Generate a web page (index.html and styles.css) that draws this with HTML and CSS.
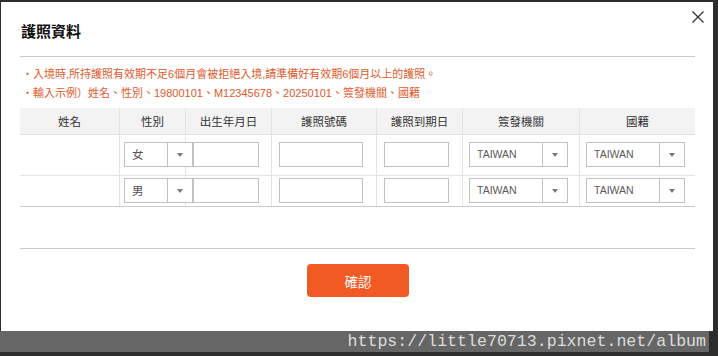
FILE: index.html
```html
<!DOCTYPE html>
<html lang="zh-Hant">
<head>
    <meta charset="UTF-8">
    <meta name="viewport" content="width=device-width, initial-scale=1.0">
    <title>護照資料</title>
    <link rel="stylesheet" href="styles.css">
</head>
<body>
    <div class="modal">
        <button class="modal-close" type="button" aria-label="close">
            <svg width="12" height="12" viewBox="0 0 12 12">
                <path d="M0.5 0.5 L11.5 11.5 M11.5 0.5 L0.5 11.5" stroke="#333" stroke-width="1.3" fill="none"/>
            </svg>
        </button>

        <div class="modal-head">
            <h3 class="modal-title">護照資料</h3>
        </div>

        <ul class="notes">
            <li>・入境時,所持護照有效期不足6個月會被拒絕入境,請準備好有效期6個月以上的護照。</li>
            <li>・輸入示例）姓名、性別、19800101、M12345678、20250101、簽發機關、國籍</li>
        </ul>

        <div class="passport-table">
            <div class="row row-head">
                <div class="cell">姓名</div>
                <div class="cell">性別</div>
                <div class="cell">出生年月日</div>
                <div class="cell">護照號碼</div>
                <div class="cell">護照到期日</div>
                <div class="cell">簽發機關</div>
                <div class="cell">國籍</div>
            </div>
            <div class="row row-first">
                <div class="cell"></div>
                <div class="cell col-sex">
                    <div class="select sel-sex"><span class="select-text">女</span><span class="select-arrow"></span></div>
                </div>
                <div class="cell col-birth"><input class="field f-birth" type="text"></div>
                <div class="cell col-no"><input class="field f-no" type="text"></div>
                <div class="cell col-exp"><input class="field f-exp" type="text"></div>
                <div class="cell col-issue">
                    <div class="select sel-wide"><span class="select-text latin">TAIWAN</span><span class="select-arrow"></span></div>
                </div>
                <div class="cell col-nation">
                    <div class="select sel-wide"><span class="select-text latin">TAIWAN</span><span class="select-arrow"></span></div>
                </div>
            </div>
            <div class="row row-last">
                <div class="cell"></div>
                <div class="cell col-sex">
                    <div class="select sel-sex"><span class="select-text">男</span><span class="select-arrow"></span></div>
                </div>
                <div class="cell col-birth"><input class="field f-birth" type="text"></div>
                <div class="cell col-no"><input class="field f-no" type="text"></div>
                <div class="cell col-exp"><input class="field f-exp" type="text"></div>
                <div class="cell col-issue">
                    <div class="select sel-wide"><span class="select-text latin">TAIWAN</span><span class="select-arrow"></span></div>
                </div>
                <div class="cell col-nation">
                    <div class="select sel-wide"><span class="select-text latin">TAIWAN</span><span class="select-arrow"></span></div>
                </div>
            </div>
        </div>

        <div class="modal-foot">
            <button class="btn-confirm" type="button">確認</button>
        </div>
    </div>

    <div class="watermark">https://little70713.pixnet.net/album</div>
</body>
</html>
```

FILE: styles.css
```css
body {
    margin: 0;
    padding: 0;
    background-color: #2d2d2d;
    font-family: "Liberation Sans", "Noto Sans CJK TC", sans-serif;
    color: #333;
    overflow: hidden;
}

.modal {
    position: relative;
    box-sizing: border-box;
    width: 712px;
    height: 329px;
    margin: 2px 0 0 1px;
    padding: 0 18px 0 19px;
    background-color: #fff;
}

.modal-close {
    position: absolute;
    top: 9px;
    right: 9px;
    width: 12px;
    height: 12px;
    padding: 0;
    border: none;
    background: none;
    line-height: 0;
    cursor: pointer;
}

.modal-head {
    padding: 20px 0 16px 1px;
    border-bottom: 1px solid #c8c8c8;
}

.modal-title {
    margin: 0;
    font-family: "Noto Sans CJK TC", sans-serif;
    font-size: 15px;
    line-height: 18px;
    font-weight: bold;
    color: #111;
}

.notes {
    list-style: none;
    margin: 0 0 6px 0;
    padding: 8px 0 0 2px;
    font-size: 11px;
    line-height: 18.5px;
    color: #e0592a;
}

.passport-table {
    font-size: 11.5px;
}

.row {
    display: grid;
    grid-template-columns: 99px 66px 86px 105px 86px 117px 116px;
    border-bottom: 1px solid #e3e3e3;
}

.cell {
    box-sizing: border-box;
    border-left: 1px solid #e3e3e3;
}

.cell:first-child {
    border-left: none;
}

.row-head {
    background-color: #f3f3f3;
}

.row-head .cell {
    height: 26px;
    line-height: 26px;
    text-align: center;
    color: #333;
    font-family: "Noto Sans CJK TC", sans-serif;
}

.row-first .cell {
    padding-top: 7px;
    padding-bottom: 8px;
}

.row-last {
    border-bottom-color: #cbcbcb;
}

.row-last .cell {
    padding-top: 2px;
    padding-bottom: 3px;
}

.col-sex { padding-left: 4px; }
.col-birth, .col-no, .col-exp { padding-left: 7px; }
.col-issue, .col-nation { padding-left: 6px; }

.field {
    display: block;
    box-sizing: border-box;
    height: 25px;
    margin: 0;
    padding: 0 6px;
    border: 1px solid #c2c2c2;
    background-color: #fff;
    outline: none;
}

.f-birth { width: 66px; }
.f-no { width: 84px; }
.f-exp { width: 65px; }

.select {
    position: relative;
    display: flex;
    box-sizing: border-box;
    height: 25px;
    border: 1px solid #c2c2c2;
    background-color: #fff;
}

.sel-sex { width: 69px; }
.sel-wide { width: 99px; }

.select-text {
    flex: 1;
    padding-left: 7px;
    line-height: 23px;
    color: #555;
    font-family: "Noto Sans CJK TC", sans-serif;
    font-size: 11.5px;
}

.select-text.latin {
    font-family: "Liberation Sans", sans-serif;
    font-size: 10.5px;
    color: #5a5a5a;
}

.select-arrow {
    box-sizing: border-box;
    width: 25px;
    border-left: 1px solid #c2c2c2;
    display: flex;
    justify-content: center;
    align-items: center;
}

.select-arrow::after {
    content: "";
    width: 0;
    height: 0;
    border-left: 3.5px solid transparent;
    border-right: 3.5px solid transparent;
    border-top: 4px solid #7a7a7a;
}

.modal-foot {
    margin-top: 41px;
    padding-top: 15px;
    border-top: 1px solid #c8c8c8;
    display: flex;
    justify-content: center;
}

.btn-confirm {
    width: 102px;
    height: 33px;
    margin-left: 1px;
    border: none;
    border-radius: 4px;
    background-color: #f15a22;
    color: #fff;
    font-family: "Noto Sans CJK TC", sans-serif;
    font-size: 13.5px;
    cursor: pointer;
}

.watermark {
    box-sizing: border-box;
    width: 709px;
    height: 21px;
    padding: 1px 3px 0 0;
    background-color: #666;
    color: #dcdcdc;
    text-align: right;
    font-family: "Liberation Mono", monospace;
    font-size: 16.6px;
    line-height: 20px;
    white-space: nowrap;
}
```
